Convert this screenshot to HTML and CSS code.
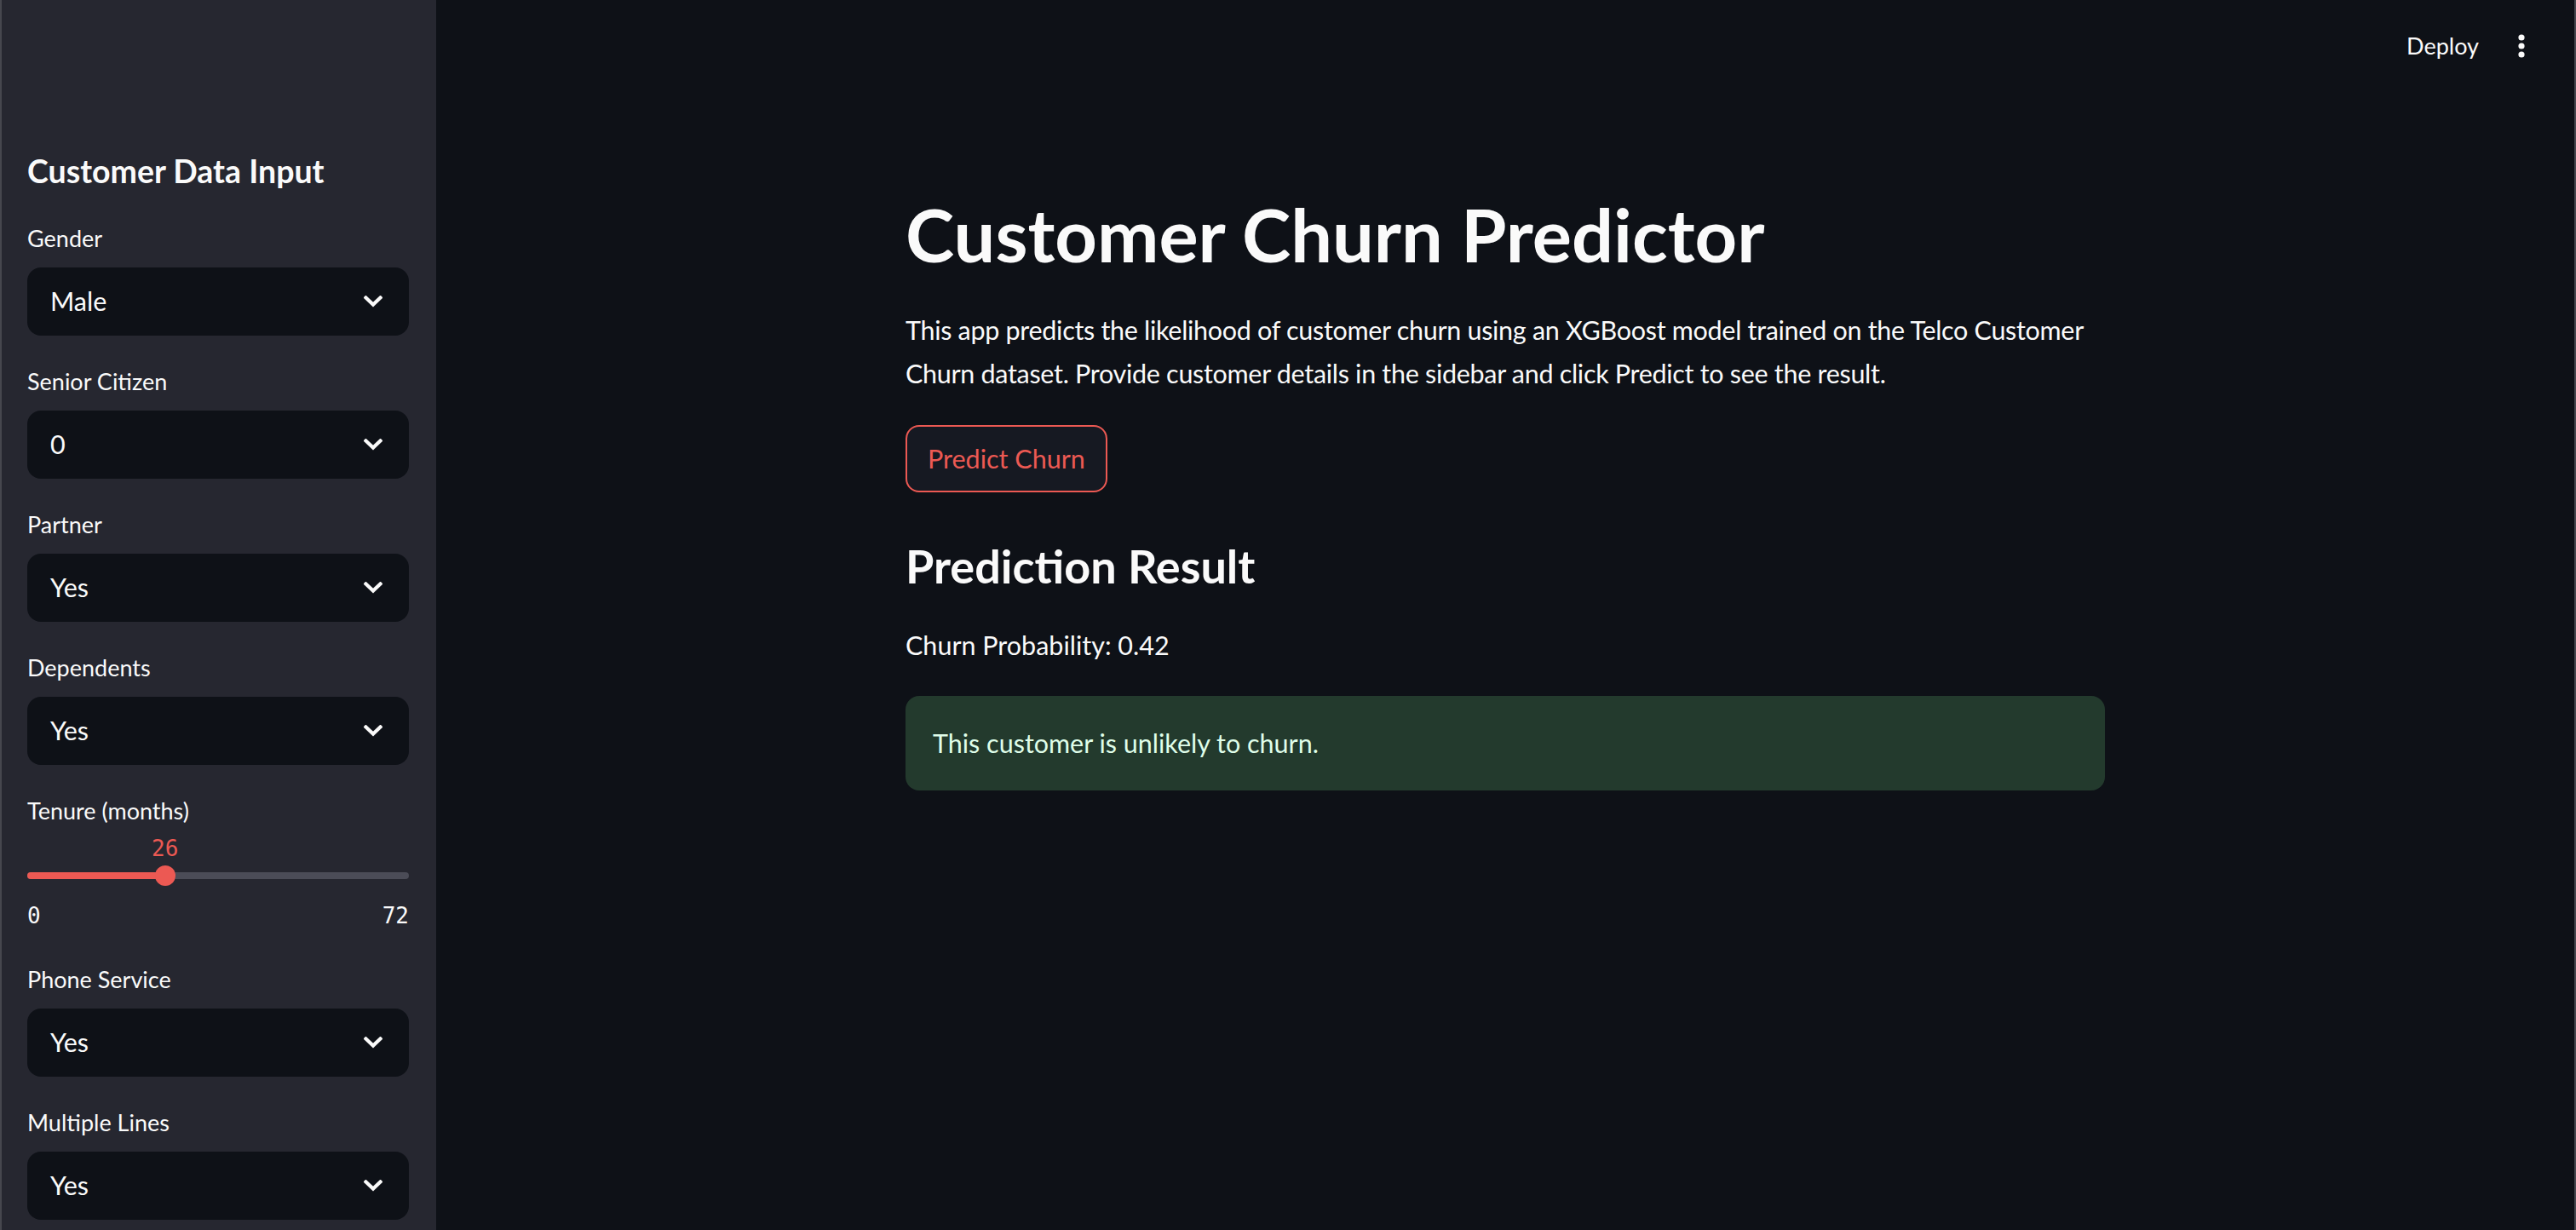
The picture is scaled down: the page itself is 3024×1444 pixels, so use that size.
FILE: index.html
```html
<!DOCTYPE html>
<html lang="en">
<head>
<meta charset="utf-8">
<title>Customer Churn Predictor</title>
<link rel="stylesheet" href="styles.css">
</head>
<body>
<aside class="sidebar">
  <h2 class="sb-title">Customer Data Input</h2>

  <div class="field">
    <div class="label">Gender</div>
    <div class="select"><span>Male</span><svg class="chev" width="22" height="14" viewBox="0 0 22 14"><path d="M2.5 2.5 L11 10.5 L19.5 2.5" fill="none" stroke="#fafafa" stroke-width="4.2" stroke-linecap="square"/></svg></div>
  </div>

  <div class="field">
    <div class="label">Senior Citizen</div>
    <div class="select"><span>0</span><svg class="chev" width="22" height="14" viewBox="0 0 22 14"><path d="M2.5 2.5 L11 10.5 L19.5 2.5" fill="none" stroke="#fafafa" stroke-width="4.2" stroke-linecap="square"/></svg></div>
  </div>

  <div class="field">
    <div class="label">Partner</div>
    <div class="select"><span>Yes</span><svg class="chev" width="22" height="14" viewBox="0 0 22 14"><path d="M2.5 2.5 L11 10.5 L19.5 2.5" fill="none" stroke="#fafafa" stroke-width="4.2" stroke-linecap="square"/></svg></div>
  </div>

  <div class="field">
    <div class="label">Dependents</div>
    <div class="select"><span>Yes</span><svg class="chev" width="22" height="14" viewBox="0 0 22 14"><path d="M2.5 2.5 L11 10.5 L19.5 2.5" fill="none" stroke="#fafafa" stroke-width="4.2" stroke-linecap="square"/></svg></div>
  </div>

  <div class="field">
    <div class="label">Tenure (months)</div>
    <div class="slider">
      <div class="track">
        <div class="fill" style="width:36.11%"></div>
        <div class="thumb" style="left:36.11%"></div>
        <div class="thumb-value" style="left:36.11%">26</div>
      </div>
      <div class="ticks"><span>0</span><span>72</span></div>
    </div>
  </div>

  <div class="field">
    <div class="label">Phone Service</div>
    <div class="select"><span>Yes</span><svg class="chev" width="22" height="14" viewBox="0 0 22 14"><path d="M2.5 2.5 L11 10.5 L19.5 2.5" fill="none" stroke="#fafafa" stroke-width="4.2" stroke-linecap="square"/></svg></div>
  </div>

  <div class="field">
    <div class="label">Multiple Lines</div>
    <div class="select"><span>Yes</span><svg class="chev" width="22" height="14" viewBox="0 0 22 14"><path d="M2.5 2.5 L11 10.5 L19.5 2.5" fill="none" stroke="#fafafa" stroke-width="4.2" stroke-linecap="square"/></svg></div>
  </div>
</aside>

<main class="main">
  <header class="topbar">
    <span class="deploy">Deploy</span>
    <svg class="menu" width="8" height="28" viewBox="0 0 8 28"><circle cx="4" cy="4" r="3.6" fill="#fafafa"/><circle cx="4" cy="14" r="3.6" fill="#fafafa"/><circle cx="4" cy="24" r="3.6" fill="#fafafa"/></svg>
  </header>

  <section class="content">
    <h1 class="title">Customer Churn Predictor</h1>
    <p class="intro">This app predicts the likelihood of customer churn using an XGBoost model trained on the Telco Customer Churn dataset. Provide customer details in the sidebar and click Predict to see the result.</p>
    <button class="btn" type="button">Predict Churn</button>
    <h3 class="subhead">Prediction Result</h3>
    <p class="prob">Churn Probability: 0.42</p>
    <div class="alert">This customer is unlikely to churn.</div>
  </section>
</main>
</body>
</html>
```

FILE: styles.css
```css
* { box-sizing: border-box; }

html, body {
  margin: 0;
  padding: 0;
  height: 100%;
}

body {
  display: flex;
  height: 100vh;
  overflow: hidden;
  background: #0e1117;
  color: #fafafa;
  font-family: "Lato", "Noto Sans", sans-serif;
  border-left: 2px solid #46474e;
  border-right: 2px solid #46474e;
}

/* ---------- Sidebar ---------- */
.sidebar {
  width: 510px;
  flex: 0 0 510px;
  background: #262730;
  padding: 177px 32px 0 30px;
  overflow: hidden;
}

.sb-title {
  margin: 0 0 33px;
  font-size: 37.5px;
  font-weight: 700;
  line-height: 48px;
}

.field {
  margin-bottom: 32px;
}

.label {
  height: 48px;
  margin-bottom: 8px;
  font-size: 27px;
  line-height: 44.8px;
}

.select {
  height: 80px;
  border-radius: 16px;
  background: #0e1117;
  display: flex;
  align-items: center;
  justify-content: space-between;
  padding: 0 31px 0 27px;
  font-size: 30.5px;
  line-height: 51.2px;
}

.chev {
  display: block;
}

/* slider */
.slider {
  height: 110px;
  padding-top: 38px;
}

.track {
  position: relative;
  height: 8px;
  border-radius: 4px;
  background: #4b4c57;
}

.fill {
  height: 100%;
  border-radius: 4px;
  background: #ec5953;
}

.thumb {
  position: absolute;
  top: -8px;
  width: 24px;
  height: 24px;
  margin-left: -12px;
  border-radius: 50%;
  background: #ec5953;
}

.thumb-value {
  position: absolute;
  top: -44px;
  transform: translateX(-50%);
  font-family: "DejaVu Sans Mono", "Liberation Mono", monospace;
  font-size: 26px;
  line-height: 32px;
  color: #ec5953;
}

.ticks {
  display: flex;
  justify-content: space-between;
  margin-top: 27px;
  font-family: "DejaVu Sans Mono", "Liberation Mono", monospace;
  font-size: 26px;
  line-height: 32px;
}

/* ---------- Main ---------- */
.main {
  flex: 1;
  display: flex;
  flex-direction: column;
  min-width: 0;
}

.topbar {
  height: 108px;
  display: flex;
  align-items: center;
  justify-content: flex-end;
  padding-right: 58px;
}

.deploy {
  font-size: 27px;
  line-height: 36px;
  margin-right: 46px;
}

.menu {
  display: block;
}

.content {
  width: 1408px;
  margin: 0 auto;
  padding-top: 114px;
}

.title {
  margin: 0 0 34px;
  font-size: 86.5px;
  font-weight: 700;
  line-height: 106px;
}

.intro {
  margin: 0 0 35px;
  font-size: 30.5px;
  line-height: 51.2px;
  letter-spacing: -0.3px;
}

.btn {
  display: block;
  height: 79px;
  padding: 0 24px;
  margin: 0 0 53px;
  border: 2px solid #ec5953;
  border-radius: 16px;
  background: #161922;
  color: #ec5953;
  font-family: inherit;
  font-size: 30.5px;
  line-height: 51.2px;
}

.subhead {
  margin: 0 0 33px;
  font-size: 54px;
  font-weight: 700;
  line-height: 67.2px;
}

.prob {
  margin: 0 0 34px;
  font-size: 30.5px;
  line-height: 51.2px;
}

.alert {
  padding: 30px 32px;
  border-radius: 16px;
  background: #233a2d;
  color: #dffde9;
  font-size: 30.5px;
  line-height: 51.2px;
}
```
